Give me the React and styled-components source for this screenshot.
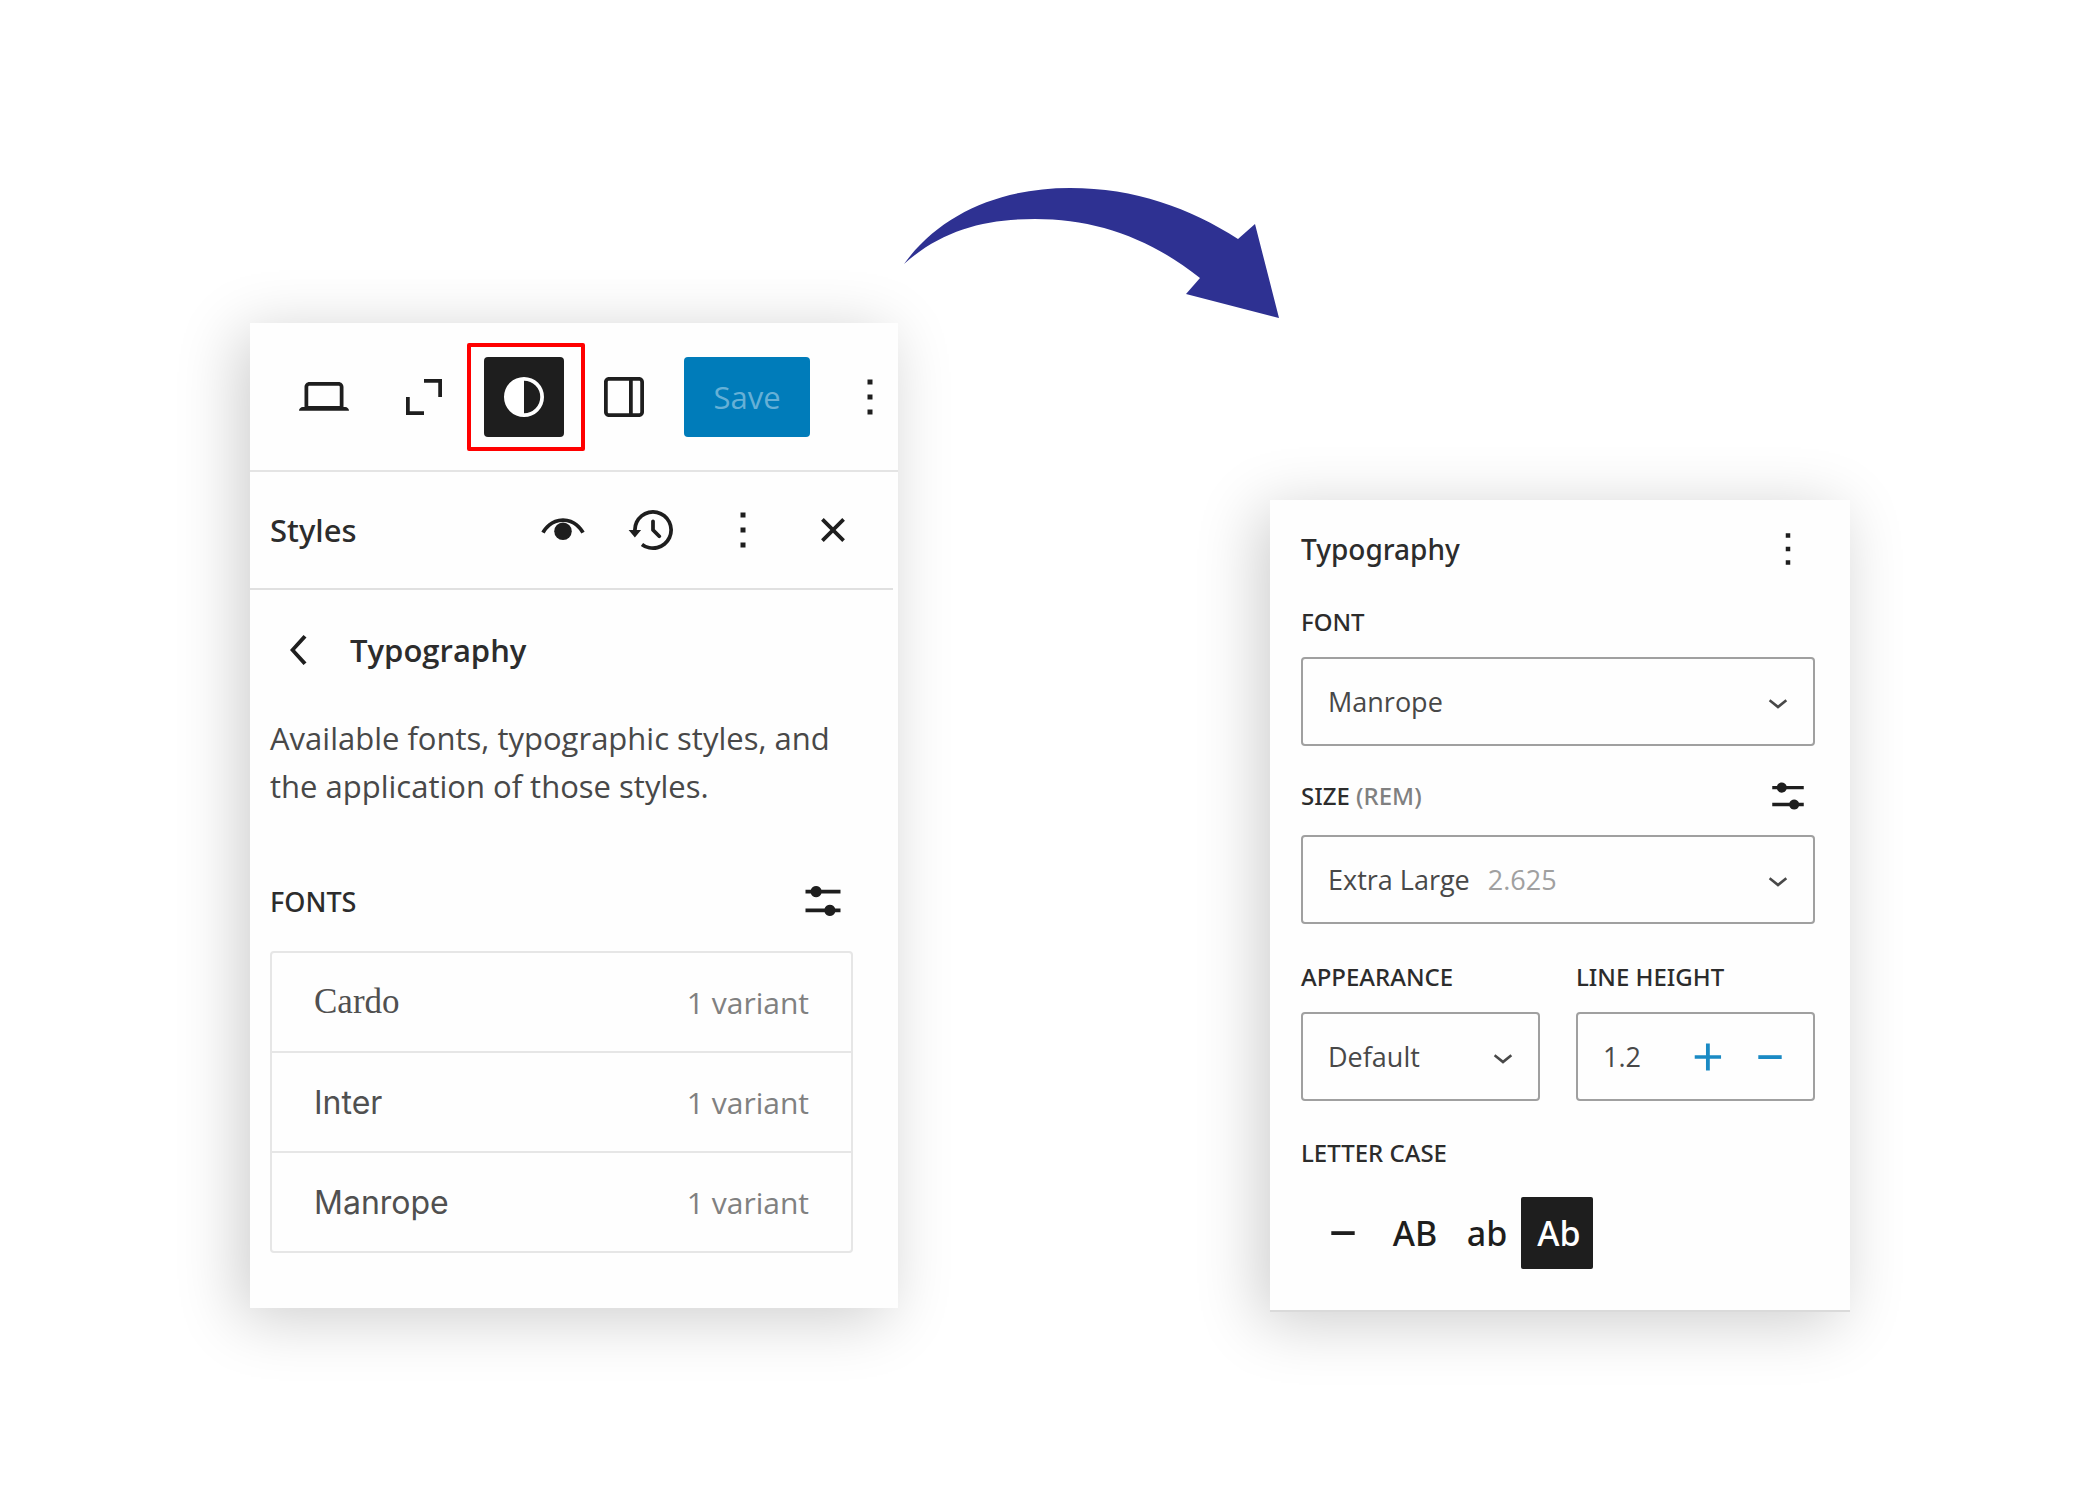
import React from 'react';
import styled, { createGlobalStyle } from 'styled-components';

const ICONS = {
    desktop: ['M20.5 16h-.7V8c0-1.1-.9-2-2-2H6.2c-1.1 0-2 .9-2 2v8h-.7c-.8 0-1.5.7-1.5 1.5h20c0-.8-.7-1.5-1.5-1.5zM5.7 8c0-.3.2-.5.5-.5h11.6c.3 0 .5.2.5.5v7.6H5.7V8z'],
    expand: ['M12 4.8h7.2V12h-1.5V6.3H12zM4.8 12h1.5v5.7H12v1.5H4.8z'],
    styles: ['M20 12a8 8 0 1 1-16 0 8 8 0 0 1 16 0Zm-1.5 0a6.5 6.5 0 0 1-6.5 6.5v-13a6.5 6.5 0 0 1 6.5 6.5Z'],
    drawer: ['M18 4H6c-1.1 0-2 .9-2 2v12c0 1.1.9 2 2 2h12c1.1 0 2-.9 2-2V6c0-1.1-.9-2-2-2zm-4 14.5H6c-.3 0-.5-.2-.5-.5V6c0-.3.2-.5.5-.5h8v13zm4.5-.5c0 .3-.2.5-.5.5h-2.5v-13H18c.3 0 .5.2.5.5v12z'],
    more: ['M13 19h-2v-2h2v2zm0-6h-2v-2h2v2zm0-6h-2V5h2v2z'],
    seen: [
        'M3.35 12.65C4.2 11 7 7.25 12 7.25s7.8 3.75 8.65 5.4l-1.3.7C18.5 11.8 16.2 8.75 12 8.75S5.5 11.8 4.65 13.35z',
        'M12 9a3.5 3.5 0 1 0 0 7 3.5 3.5 0 0 0 0-7z'
    ],
    backup: ['M5.5 12h1.75l-2.5 3-2.5-3H4a8 8 0 113.134 6.35l.907-1.194A6.5 6.5 0 105.5 12zm9.53 1.97l-2.28-2.28V8.5a.75.75 0 00-1.5 0V12a.747.747 0 00.218.529l2.502 2.502a.75.75 0 101.06-1.061z'],
    close: ['M12 13.06l3.712 3.713 1.061-1.06L13.061 12l3.712-3.712-1.06-1.06L12 10.938 8.288 7.227l-1.061 1.06L10.939 12l-3.712 3.712 1.06 1.061L12 13.061z'],
    back: ['M14.6 7l-1.2-1L8 12l5.4 6 1.2-1-4.6-5z'],
    settings: [
        'm19 7.5h-7.628c-.3089-.87389-1.1423-1.5-2.122-1.5-.97966 0-1.81309.62611-2.12197 1.5h-2.12803v1.5h2.12803c.30888.87389 1.14231 1.5 2.12197 1.5.9797 0 1.8131-.62611 2.122-1.5h7.628z',
        'm19 15h-2.128c-.3089-.8739-1.1423-1.5-2.122-1.5s-1.8131.6261-2.122 1.5h-7.628v1.5h7.628c.3089.8739 1.1423 1.5 2.122 1.5s1.8131-.6261 2.122-1.5h2.128z'
    ],
    plus: ['M11.1 6h1.7v5.2h5v1.6h-5V18h-1.7v-5.2h-5v-1.6h5z'],
    minus: ['M6.8 11.2h10.4v1.7H6.8z'],
    chevron: ['M17.5 11.6L12 16l-5.5-4.4.9-1.2L12 14l4.5-3.6z']
};

const FONTS = [
    { name: 'Cardo', family: "'Liberation Serif', serif", size: 35 },
    { name: 'Inter', family: 'Inter, sans-serif', size: 32 },
    { name: 'Manrope', family: 'Inter, sans-serif', size: 32 }
];

const CASES = [
    { id: 'none', label: 'None' },
    { id: 'upper', label: 'Uppercase', text: 'AB' },
    { id: 'lower', label: 'Lowercase', text: 'ab' },
    { id: 'capital', label: 'Capitalize', text: 'Ab' }
];

const Icon = ({ name, size = 60 }) => (
    <Glyph viewBox="0 0 24 24" width={size} height={size} aria-hidden="true">
        {ICONS[name].map(d => <path key={d} d={d} fillRule="evenodd" />)}
    </Glyph>
);

const StylesPanel = () => (
    <LeftPanel>
        <Toolbar>
            <IconButton $width={80} aria-label="View"><Icon name="desktop" /></IconButton>
            <IconButton aria-label="Zoom out"><Icon name="expand" /></IconButton>
            <Highlight>
                <IconButton $width={80} $active aria-label="Styles" aria-pressed="true"><Icon name="styles" /></IconButton>
            </Highlight>
            <IconButton aria-label="Settings"><Icon name="drawer" /></IconButton>
            <SaveButton disabled>Save</SaveButton>
            <IconButton aria-label="Options"><Icon name="more" /></IconButton>
        </Toolbar>
        <PanelHeader>
            <PanelTitle>Styles</PanelTitle>
            <HeaderActions>
                <IconButton aria-label="Style book"><Icon name="seen" /></IconButton>
                <IconButton aria-label="Revisions"><Icon name="backup" /></IconButton>
                <IconButton aria-label="More"><Icon name="more" /></IconButton>
                <IconButton aria-label="Close styles"><Icon name="close" /></IconButton>
            </HeaderActions>
        </PanelHeader>
        <PanelBody>
            <BackRow>
                <IconButton aria-label="Back"><Icon name="back" /></IconButton>
                <SectionTitle>Typography</SectionTitle>
            </BackRow>
            <Description>
                Available fonts, typographic styles, and the application of those styles.
            </Description>
            <FontsHeader>
                <FontsLabel>FONTS</FontsLabel>
                <IconButton aria-label="Manage fonts"><Icon name="settings" /></IconButton>
            </FontsHeader>
            <FontList>
                {FONTS.map(font => (
                    <li key={font.name}>
                        <FontRow>
                            <FontName $family={font.family} $size={font.size}>{font.name}</FontName>
                            <Variants>1 variant</Variants>
                        </FontRow>
                    </li>
                ))}
            </FontList>
        </PanelBody>
    </LeftPanel>
);

class TypographyPanel extends React.Component {
    constructor(props) {
        super(props);
        this.state = {
            lineHeight: '1.2',
            letterCase: 'capital'
        };
    }

    changeLineHeight = (step) => {
        const current = parseFloat(this.state.lineHeight) || 0;
        this.setState({
            lineHeight: Math.max(0, current + step).toFixed(1)
        });
    };

    render() {
        const { lineHeight, letterCase } = this.state;
        return (
            <RightPanel>
                <TitleRow>
                    <TypographyTitle>Typography</TypographyTitle>
                    <IconButton $width={54} aria-label="Typography options"><Icon name="more" size={54} /></IconButton>
                </TitleRow>
                <Label htmlFor="font">FONT</Label>
                <Field>
                    <Select id="font" defaultValue="Manrope">
                        <option>Manrope</option>
                        <option>Inter</option>
                        <option>Cardo</option>
                    </Select>
                    <Icon name="chevron" size={40} />
                </Field>
                <SizeRow>
                    <Label htmlFor="size">SIZE <Unit>(REM)</Unit></Label>
                    <IconButton $width={54} aria-label="Set custom size"><Icon name="settings" size={54} /></IconButton>
                </SizeRow>
                <Field>
                    <Select id="size" $hug defaultValue="Extra Large">
                        <option>Large</option>
                        <option>Extra Large</option>
                    </Select>
                    <Hint>2.625</Hint>
                    <Icon name="chevron" size={40} />
                </Field>
                <Columns>
                    <div>
                        <Label htmlFor="appearance">APPEARANCE</Label>
                        <Field>
                            <Select id="appearance" defaultValue="Default">
                                <option>Default</option>
                            </Select>
                            <Icon name="chevron" size={40} />
                        </Field>
                    </div>
                    <div>
                        <Label htmlFor="line-height">LINE HEIGHT</Label>
                        <Field>
                            <NumberInput
                                id="line-height"
                                type="text"
                                inputMode="decimal"
                                value={lineHeight}
                                onChange={event => this.setState({ lineHeight: event.target.value })}
                            />
                            <Steppers>
                                <StepButton aria-label="Increment" onClick={() => this.changeLineHeight(0.1)}>
                                    <Icon name="plus" size={54} />
                                </StepButton>
                                <StepButton aria-label="Decrement" onClick={() => this.changeLineHeight(-0.1)}>
                                    <Icon name="minus" size={54} />
                                </StepButton>
                            </Steppers>
                        </Field>
                    </div>
                </Columns>
                <GroupLabel id="letter-case">LETTER CASE</GroupLabel>
                <CaseGroup role="group" aria-labelledby="letter-case">
                    {CASES.map(item => (
                        <CaseButton
                            key={item.id}
                            aria-label={item.label}
                            aria-pressed={letterCase === item.id}
                            $active={letterCase === item.id}
                            onClick={() => this.setState({ letterCase: item.id })}
                        >
                            {item.text || <Icon name="minus" size={54} />}
                        </CaseButton>
                    ))}
                </CaseGroup>
            </RightPanel>
        );
    }
}

const App = () => (
    <>
        <GlobalStyle />
        <Page>
            <StylesPanel />
            <Arrow viewBox="18 18 372 131" aria-hidden="true">
                <path d="M24 94C60 44 120 18 190 18c65 0 120 20 168 51l17-15 24 94-93-24 14-16C270 68 215 49 155 49 105 49 62 60 24 94z" />
            </Arrow>
            <TypographyPanel />
        </Page>
    </>
);

export default App;

const GlobalStyle = createGlobalStyle`
    *, *::before, *::after {
        box-sizing: border-box;
    }

    body {
        margin: 0;
        background: #ffffff;
        color: #2c2c2c;
        font-family: 'Open Sans', 'Noto Sans', sans-serif;
    }

    button, input, select {
        margin: 0;
        padding: 0;
        border: 0;
        background: none;
        color: inherit;
        font: inherit;
    }

    h1, h2, h3, p, ul {
        margin: 0;
        padding: 0;
    }
`;

const Page = styled.main`
    display: grid;
    grid-template-columns: minmax(0, 162fr) minmax(0, 93fr) minmax(0, 145fr);
    align-items: start;
    max-width: 1600px;
    min-height: 100vh;
    margin: 0 auto;
    padding: 188px 0 120px;
`;

const Glyph = styled.svg`
    display: block;
    flex: none;
    fill: currentColor;
`;

const Arrow = styled.svg`
    display: block;
    position: relative;
    width: 100%;
    overflow: visible;
    fill: #2e3192;
`;

const Panel = styled.section`
    background: #fefefe;
    box-shadow: -10px 10px 60px rgba(0, 0, 0, 0.2);
`;

const LeftPanel = styled(Panel)`
    margin-top: 135px;
`;

const RightPanel = styled(Panel)`
    margin-top: 312px;
    padding: 22px 35px 41px 31px;
    border-bottom: 2px solid #dadada;
`;

const Toolbar = styled.div`
    display: flex;
    align-items: center;
    gap: 30px;
    height: 149px;
    padding-left: 34px;
    border-bottom: 2px solid #e4e4e4;
`;

const IconButton = styled.button`
    display: flex;
    flex: none;
    align-items: center;
    justify-content: center;
    width: ${props => props.$width || 60}px;
    height: ${props => props.$width || 60}px;
    border-radius: 4px;
    background: ${props => props.$active ? '#1e1e1e' : 'transparent'};
    color: ${props => props.$active ? '#ffffff' : '#1e1e1e'};
    cursor: pointer;
`;

const Highlight = styled.div`
    position: relative;

    &::after {
        content: '';
        position: absolute;
        inset: -14px -21px -14px -17px;
        border: 4px solid #ff0000;
        border-radius: 2px;
        pointer-events: none;
    }
`;

const SaveButton = styled.button`
    flex: none;
    width: 126px;
    height: 80px;
    border-radius: 4px;
    background: #007cba;
    color: #66b0d6;
    font-size: 31px;
`;

const PanelHeader = styled.header`
    display: flex;
    align-items: center;
    justify-content: space-between;
    height: 118px;
    margin-right: 5px;
    padding: 0 30px 0 20px;
    border-bottom: 2px solid #e0e0e0;
`;

const PanelTitle = styled.h1`
    font-family: 'Noto Sans', sans-serif;
    font-size: 31px;
    font-weight: 500;
`;

const HeaderActions = styled.div`
    display: flex;
    gap: 30px;
`;

const PanelBody = styled.div`
    padding: 30px 45px 55px 20px;
`;

const BackRow = styled.div`
    display: flex;
    align-items: center;
    gap: 20px;
`;

const SectionTitle = styled.h2`
    font-size: 31px;
    font-weight: 600;
`;

const Description = styled.p`
    margin-top: 34px;
    color: #484848;
    font-size: 31px;
    line-height: 48px;
`;

const FontsHeader = styled.div`
    display: flex;
    align-items: center;
    justify-content: space-between;
    margin-top: 61px;
`;

const FontsLabel = styled.h3`
    font-family: 'Noto Sans', sans-serif;
    font-size: 27px;
    font-weight: 500;
`;

const FontList = styled.ul`
    margin-top: 20px;
    border: 2px solid #e6e6e6;
    border-radius: 4px;
    list-style: none;

    li + li {
        border-top: 2px solid #e6e6e6;
    }
`;

const FontRow = styled.button`
    display: flex;
    align-items: center;
    justify-content: space-between;
    width: 100%;
    height: 98px;
    padding: 0 42px;
    cursor: pointer;
`;

const FontName = styled.span`
    color: #505050;
    font-family: ${props => props.$family};
    font-size: ${props => props.$size}px;
`;

const Variants = styled.span`
    color: #808080;
    font-size: 30px;
`;

const TitleRow = styled.header`
    display: flex;
    align-items: center;
    justify-content: space-between;
    margin-bottom: 30px;
`;

const TypographyTitle = styled.h2`
    font-family: 'Noto Sans', sans-serif;
    font-size: 28px;
    font-weight: 500;
`;

const Label = styled.label`
    display: block;
    font-family: 'Noto Sans', sans-serif;
    font-size: 24px;
    font-weight: 500;
    line-height: 32px;
`;

const GroupLabel = styled.div`
    margin: 36px 0 28px;
    font-family: 'Noto Sans', sans-serif;
    font-size: 24px;
    font-weight: 500;
    line-height: 32px;
`;

const Unit = styled.span`
    color: #808080;
`;

const Field = styled.div`
    display: flex;
    align-items: center;
    height: 89px;
    margin-top: 19px;
    padding: 0 15px 0 25px;
    border: 2px solid #a0a0a0;
    border-radius: 4px;
    color: #484848;

    > svg {
        margin-left: auto;
        pointer-events: none;
    }
`;

const Select = styled.select`
    flex: ${props => props.$hug ? 'none' : '1'};
    min-width: 0;
    height: 100%;
    appearance: none;
    field-sizing: ${props => props.$hug ? 'content' : 'fixed'};
    font-size: 27px;
`;

const Hint = styled.span`
    margin-left: 18px;
    color: #a0a0a0;
    font-size: 27px;
`;

const SizeRow = styled.div`
    display: flex;
    align-items: center;
    justify-content: space-between;
    margin: 23px 0 -7px;
`;

const Columns = styled.div`
    display: grid;
    grid-template-columns: repeat(2, minmax(0, 1fr));
    gap: 36px;
    margin-top: 37px;
`;

const NumberInput = styled.input`
    flex: 1;
    min-width: 0;
    font-size: 27px;
`;

const Steppers = styled.div`
    display: flex;
    gap: 6px;
`;

const StepButton = styled.button`
    display: flex;
    align-items: center;
    justify-content: center;
    width: 56px;
    height: 56px;
    color: #1a8ac4;
    cursor: pointer;
`;

const CaseGroup = styled.div`
    display: flex;
    padding-left: 4px;
`;

const CaseButton = styled.button`
    display: flex;
    align-items: center;
    justify-content: center;
    width: 72px;
    height: 72px;
    padding-left: 4px;
    border-radius: 2px;
    background: ${props => props.$active ? '#1e1e1e' : 'transparent'};
    color: ${props => props.$active ? '#ffffff' : '#1e1e1e'};
    font-family: 'Noto Sans', sans-serif;
    font-size: 34px;
    font-weight: 500;
    cursor: pointer;
`;
